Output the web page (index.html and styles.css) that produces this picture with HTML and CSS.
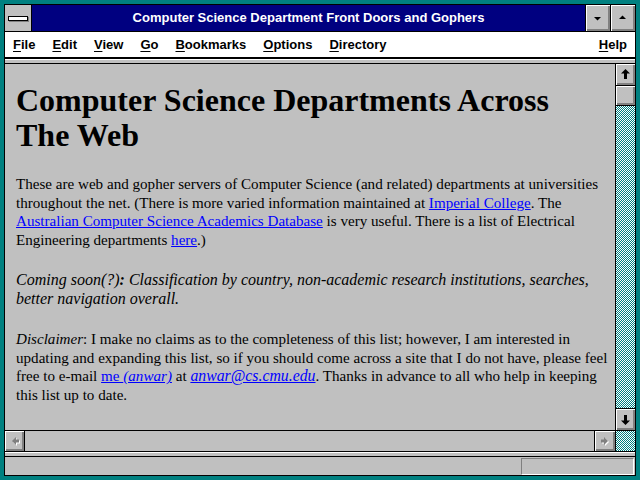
FILE: index.html
```html
<!DOCTYPE html>
<html>
<head>
<meta charset="utf-8">
<title>Computer Science Department Front Doors and Gophers</title>
<link rel="stylesheet" href="styles.css">
</head>
<body>
<div class="window">
  <div class="inner">
    <div class="titlebar">
      <div class="sysmenu"><span class="sysbar"></span></div>
      <div class="title">Computer Science Department Front Doors and Gophers</div>
      <div class="tbtn">
        <svg width="24" height="26" viewBox="0 0 24 26"><path d="M8 12 L15 12 L11.5 15.5 Z" fill="#000"/></svg>
      </div>
      <div class="tbtn">
        <svg width="24" height="26" viewBox="0 0 24 26"><path d="M8 14 L15 14 L11.5 10.5 Z" fill="#000"/></svg>
      </div>
    </div>
    <div class="menubar">
      <span class="mi"><u>F</u>ile</span>
      <span class="mi"><u>E</u>dit</span>
      <span class="mi"><u>V</u>iew</span>
      <span class="mi"><u>G</u>o</span>
      <span class="mi"><u>B</u>ookmarks</span>
      <span class="mi"><u>O</u>ptions</span>
      <span class="mi"><u>D</u>irectory</span>
      <span class="mi help"><u>H</u>elp</span>
    </div>
    <div class="strip"></div>
    <div class="viewport">
      <div class="doc">
        <h1>Computer Science Departments Across The Web</h1>
        <p>These are web and gopher servers of Computer Science (and related) departments at universities throughout the net. (There is more varied information maintained at <a href="#">Imperial College</a>. The <a href="#">Australian Computer Science Academics Database</a> is very useful. There is a list of Electrical Engineering departments <a href="#">here</a>.)</p>
        <p class="soon"><i>Coming soon(?)<b>:</b> Classification by country, non-academic research institutions, searches, better navigation overall.</i></p>
        <p><i>Disclaimer</i>: I make no claims as to the completeness of this list; however, I am interested in updating and expanding this list, so if you should come across a site that I do not have, please feel free to e-mail <a href="#">me <i>(anwar)</i></a> at <a href="#"><i class="mail">anwar@cs.cmu.edu</i></a>. Thanks in advance to all who help in keeping this list up to date.</p>
      </div>
      <div class="vscroll">
        <div class="sbtn up">
          <svg width="19" height="21" viewBox="0 0 19 21"><path d="M9.5 5 L14 9.5 L11 9.5 L11 15 L8 15 L8 9.5 L5 9.5 Z" fill="#000"/></svg>
        </div>
        <div class="thumb"></div>
        <div class="track hatch"></div>
        <div class="sbtn down">
          <svg width="19" height="21" viewBox="0 0 19 21"><path d="M9.5 16 L14 11.5 L11 11.5 L11 6 L8 6 L8 11.5 L5 11.5 Z" fill="#000"/></svg>
        </div>
      </div>
    </div>
    <div class="hscroll">
      <div class="hbtn left">
        <svg width="19" height="20" viewBox="0 0 19 20">
          <path d="M7 10 L11 6 L11 8.5 L14 8.5 L14 11.5 L11 11.5 L11 14 Z" fill="#fff" transform="translate(1 1)"/>
          <path d="M7 10 L11 6 L11 8.5 L14 8.5 L14 11.5 L11 11.5 L11 14 Z" fill="#808080"/>
        </svg>
      </div>
      <div class="htrack"></div>
      <div class="hbtn right">
        <svg width="20" height="20" viewBox="0 0 20 20">
          <path d="M13 10 L9 6 L9 8.5 L6 8.5 L6 11.5 L9 11.5 L9 14 Z" fill="#fff" transform="translate(1 1)"/>
          <path d="M13 10 L9 6 L9 8.5 L6 8.5 L6 11.5 L9 11.5 L9 14 Z" fill="#808080"/>
        </svg>
      </div>
      <div class="corner hatch"></div>
    </div>
    <div class="strip2"></div>
    <div class="status">
      <div class="field"></div>
    </div>
  </div>
</div>
</body>
</html>
```
FILE: styles.css
```css
* { box-sizing: border-box; }
html, body { margin: 0; padding: 0; background: #008080; }

.window {
  width: 640px;
  height: 480px;
  border: 4px solid #008080;
  background: #008080;
}
.inner {
  height: 100%;
  border: 1px solid #000;
  background: #c0c0c0;
  display: flex;
  flex-direction: column;
  overflow: hidden;
}

/* title bar */
.titlebar {
  flex: none;
  height: 27px;
  display: flex;
  border-bottom: 1px solid #000;
}
.sysmenu {
  width: 27px;
  border-right: 1px solid #000;
  background: #c0c0c0;
  display: flex;
  align-items: center;
  justify-content: center;
}
.sysbar {
  display: block;
  width: 20px;
  height: 5px;
  background: #fff;
  border: 1px solid #000;
  box-shadow: 1px 1px 0 #808080;
}
.title {
  flex: 1;
  background: #000080;
  color: #fff;
  font: bold 13px "Liberation Sans", Arial, sans-serif;
  display: flex;
  align-items: center;
  justify-content: center;
  padding-bottom: 1px;
}
.tbtn {
  width: 25px;
  border-left: 1px solid #000;
  background: #c0c0c0;
  box-shadow: inset 1px 1px 0 #fff, inset -1px -1px 0 #808080, inset -2px -2px 0 #808080;
}
.tbtn svg { display: block; }

/* menu bar */
.menubar {
  flex: none;
  height: 27px;
  background: #fff;
  border-bottom: 2px solid #000;
  display: flex;
  align-items: center;
  padding-left: 8px;
  gap: 17px;
  font: bold 13px "Liberation Sans", Arial, sans-serif;
  color: #000;
}
.mi u { text-decoration: underline; text-underline-offset: 2px; }
.mi.help { margin-left: auto; margin-right: 8px; }

.strip {
  flex: none;
  height: 5px;
  border-top: 1px solid #fff;
  border-bottom: 1px solid #000;
  background: #c0c0c0;
}

/* document viewport */
.viewport {
  flex: none;
  height: 366px;
  display: flex;
}
.doc {
  flex: 1;
  overflow: hidden;
  padding: 0 6px 0 11px;
  font: 15.1px "Liberation Serif", "Times New Roman", serif;
  color: #000;
  background: #c0c0c0;
}
.doc h1 {
  margin: 19px 0 22px;
  font-size: 32px;
  line-height: 35px;
  font-weight: bold;
}
.doc p {
  margin: 0 0 21.5px;
  line-height: 18.67px;
}
.doc p.soon { font-size: 16px; }
.doc .mail { font-size: 15.8px; }
.doc a { color: #0000ff; text-decoration: underline; }

.vscroll {
  width: 20px;
  border-left: 1px solid #000;
  display: flex;
  flex-direction: column;
}
.sbtn {
  flex: none;
  height: 22px;
  background: #c0c0c0;
}
.sbtn svg { display: block; }
.sbtn.up {
  border-bottom: 1px solid #000;
  box-shadow: inset 1px 1px 0 #fff, inset -1px -1px 0 #808080, inset -2px -2px 0 #808080;
}
.sbtn.down {
  border-top: 1px solid #000;
  box-shadow: inset 1px 1px 0 #fff, inset -1px -1px 0 #808080, inset -2px -2px 0 #808080;
}
.thumb {
  flex: none;
  height: 20px;
  background: #c0c0c0;
  border-bottom: 1px solid #000;
  box-shadow: inset 1px 1px 0 #fff, inset -1px -1px 0 #808080, inset -2px -2px 0 #808080;
}
.track { flex: 1; }
.hatch {
  background-color: #fff;
  background-image: repeating-conic-gradient(#008080 0% 25%, #ffffff 0% 50%);
  background-size: 2px 2px;
}

/* horizontal scroll bar */
.hscroll {
  flex: none;
  height: 22px;
  border-top: 1px solid #000;
  border-bottom: 1px solid #000;
  display: flex;
}
.hbtn {
  background: #c0c0c0;
  box-shadow: inset 1px 1px 0 #fff, inset -1px -1px 0 #808080, inset -2px -2px 0 #808080;
}
.hbtn svg { display: block; }
.hbtn.left { width: 20px; border-right: 1px solid #000; }
.hbtn.right { width: 21px; border-left: 1px solid #000; }
.htrack { flex: 1; background: #c0c0c0; }
.corner { width: 20px; border-left: 1px solid #000; }

.strip2 {
  flex: none;
  height: 5px;
  border-top: 1px solid #fff;
  border-bottom: 1px solid #000;
  background: #c0c0c0;
}

/* status bar */
.status {
  flex: 1;
  display: flex;
  justify-content: flex-end;
  align-items: flex-start;
  padding: 1px 1px 0 0;
  background: #c0c0c0;
}
.field {
  width: 113px;
  height: 17px;
  border-top: 1px solid #808080;
  border-left: 1px solid #808080;
  border-bottom: 1px solid #fff;
  border-right: 1px solid #fff;
}
```
